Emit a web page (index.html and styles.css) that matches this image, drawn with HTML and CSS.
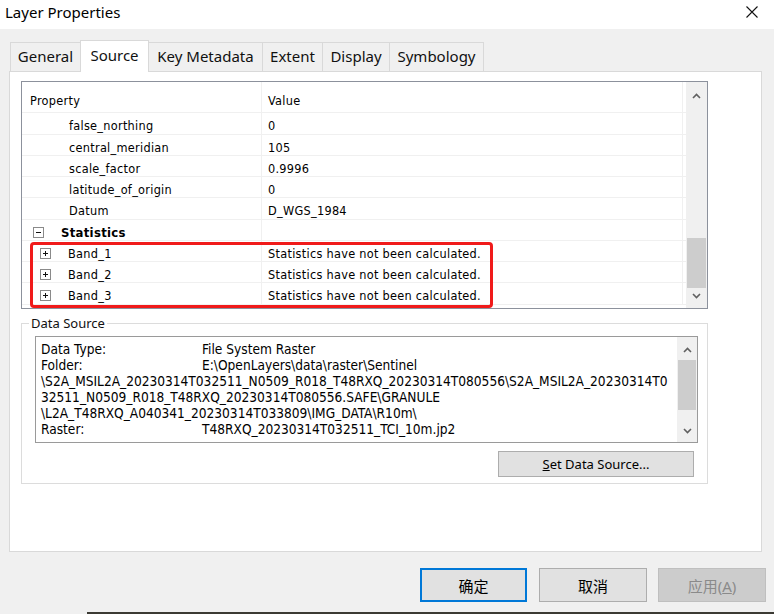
FILE: index.html
```html
<!DOCTYPE html>
<html lang="en">
<head>
    <meta charset="UTF-8">
    <title>Layer Properties</title>
    <link rel="stylesheet" href="styles.css">
</head>
<body>
    <div class="titlebar">
        <span class="title">Layer Properties</span>
        <svg class="close" width="12" height="12" viewBox="0 0 12 12"><path d="M0.5 0.5 L11.5 11.5 M11.5 0.5 L0.5 11.5" stroke="#111" stroke-width="1.1" fill="none"/></svg>
    </div>

    <div class="tabs">
        <div class="tab t-general">General</div>
        <div class="tab t-source active">Source</div>
        <div class="tab t-key">Key Metadata</div>
        <div class="tab t-extent">Extent</div>
        <div class="tab t-display">Display</div>
        <div class="tab t-symbology">Symbology</div>
    </div>

    <div class="panel">
        <div class="grid">
            <div class="grid-table">
                <div class="row head"><div class="c1">Property</div><div class="c2">Value</div></div>
                <div class="row"><div class="c1 child">false_northing</div><div class="c2">0</div></div>
                <div class="row"><div class="c1 child">central_meridian</div><div class="c2">105</div></div>
                <div class="row"><div class="c1 child">scale_factor</div><div class="c2">0.9996</div></div>
                <div class="row"><div class="c1 child">latitude_of_origin</div><div class="c2">0</div></div>
                <div class="row"><div class="c1 child">Datum</div><div class="c2">D_WGS_1984</div></div>
                <div class="row">
                    <div class="c1 group-row">
                        <svg class="toggle" width="11" height="11" viewBox="0 0 11 11"><rect x="0.5" y="0.5" width="10" height="10" fill="#fff" stroke="#8a8a8a"/><path d="M3 5.5 H8" stroke="#111"/></svg><b>Statistics</b>
                    </div>
                    <div class="c2"></div>
                </div>
                <div class="row">
                    <div class="c1 band">
                        <svg class="toggle" width="11" height="11" viewBox="0 0 11 11"><rect x="0.5" y="0.5" width="10" height="10" fill="#fff" stroke="#8a8a8a"/><path d="M3 5.5 H8 M5.5 3 V8" stroke="#111"/></svg>Band_1
                    </div>
                    <div class="c2">Statistics have not been calculated.</div>
                </div>
                <div class="row">
                    <div class="c1 band">
                        <svg class="toggle" width="11" height="11" viewBox="0 0 11 11"><rect x="0.5" y="0.5" width="10" height="10" fill="#fff" stroke="#8a8a8a"/><path d="M3 5.5 H8 M5.5 3 V8" stroke="#111"/></svg>Band_2
                    </div>
                    <div class="c2">Statistics have not been calculated.</div>
                </div>
                <div class="row">
                    <div class="c1 band">
                        <svg class="toggle" width="11" height="11" viewBox="0 0 11 11"><rect x="0.5" y="0.5" width="10" height="10" fill="#fff" stroke="#8a8a8a"/><path d="M3 5.5 H8 M5.5 3 V8" stroke="#111"/></svg>Band_3
                    </div>
                    <div class="c2">Statistics have not been calculated.</div>
                </div>
            </div>
            <div class="vscroll grid-scroll">
                <svg class="arrow" width="9" height="6" viewBox="0 0 9 6"><path d="M1 5 L4.5 1.5 L8 5" stroke="#606060" stroke-width="1.6" fill="none"/></svg>
                <div class="track"><div class="thumb"></div></div>
                <svg class="arrow" width="9" height="6" viewBox="0 0 9 6"><path d="M1 1 L4.5 4.5 L8 1" stroke="#606060" stroke-width="1.6" fill="none"/></svg>
            </div>
            <div class="highlight"></div>
        </div>

        <fieldset class="source-group">
            <legend>Data Source</legend>
            <div class="textbox">
                <div class="source-text">
                    <div class="line"><span class="label">Data Type:</span>File System Raster</div>
                    <div class="line"><span class="label">Folder:</span>E:\OpenLayers\data\raster\Sentinel</div>
                    <div class="line">\S2A_MSIL2A_20230314T032511_N0509_R018_T48RXQ_20230314T080556\S2A_MSIL2A_20230314T0</div>
                    <div class="line">32511_N0509_R018_T48RXQ_20230314T080556.SAFE\GRANULE</div>
                    <div class="line">\L2A_T48RXQ_A040341_20230314T033809\IMG_DATA\R10m\</div>
                    <div class="line"><span class="label">Raster:</span>T48RXQ_20230314T032511_TCI_10m.jp2</div>
                </div>
                <div class="vscroll text-scroll">
                    <svg class="arrow" width="9" height="6" viewBox="0 0 9 6"><path d="M1 5 L4.5 1.5 L8 5" stroke="#606060" stroke-width="1.6" fill="none"/></svg>
                    <div class="track"><div class="thumb"></div></div>
                    <svg class="arrow" width="9" height="6" viewBox="0 0 9 6"><path d="M1 1 L4.5 4.5 L8 1" stroke="#606060" stroke-width="1.6" fill="none"/></svg>
                </div>
            </div>
            <div class="source-actions">
                <button class="btn set-source"><u>S</u>et Data Source...</button>
            </div>
        </fieldset>
    </div>

    <div class="actions">
        <button class="btn dlg default">确定</button>
        <button class="btn dlg">取消</button>
        <button class="btn dlg disabled">应用(<u>A</u>)</button>
    </div>
    <div class="desktop"></div>
</body>
</html>
```

FILE: styles.css
```css
body {
    margin: 0;
    width: 774px;
    height: 614px;
    overflow: hidden;
    background: #f0f0f0;
    font-family: 'Noto Sans', 'Noto Sans CJK SC', sans-serif;
    color: #000;
}
.titlebar {
    height: 29px;
    background: #fff;
    display: flex;
    align-items: flex-start;
    justify-content: space-between;
}
.title {
    font-size: 15px;
    line-height: 24px;
    padding-left: 5px;
}
.close {
    margin: 6px 16px 0 0;
}

/* tabs */
.tabs {
    display: flex;
    align-items: flex-end;
    padding-left: 10px;
    height: 42px;
}
.tab {
    height: 30px;
    margin-bottom: -1px;
    margin-right: -1px;
    box-sizing: border-box;
    border: 1px solid #d9d9d9;
    background: #f0f0f0;
    font-size: 15px;
    line-height: 27px;
    text-align: center;
    color: #111;
}
.tab.active {
    height: 32px;
    background: #fff;
    border-bottom: none;
    position: relative;
    z-index: 1;
    line-height: 28px;
}
.t-general { width: 71px; }
.t-source { width: 69px; }
.t-key { width: 115px; }
.t-extent { width: 61px; }
.t-display { width: 68px; }
.t-symbology { width: 95px; }

.panel {
    margin-left: 9px;
    width: 753px;
    height: 481px;
    box-sizing: border-box;
    border: 1px solid #d9d9d9;
    background: #fff;
    padding: 9px 0 0 11px;
}

/* property grid */
.grid {
    position: relative;
    width: 687px;
    height: 228px;
    box-sizing: border-box;
    border: 1px solid #8c919c;
    display: flex;
    font-family: 'DejaVu Sans Condensed', 'Liberation Sans', sans-serif;
    font-size: 12.6px;
    letter-spacing: 0.28px;
}
.grid-table {
    width: 664px;
}
.row {
    display: flex;
    height: 21.25px;
    box-sizing: border-box;
    border-bottom: 1px solid #f0f0f0;
    line-height: 26px;
}
.row.head {
    height: 31.3px;
    line-height: 37px;
}
.c1 {
    width: 240px;
    box-sizing: border-box;
    border-right: 1px solid #f0f0f0;
    padding-left: 8px;
    white-space: nowrap;
}
.c2 {
    width: 421px;
    box-sizing: border-box;
    border-right: 1px solid #f0f0f0;
    padding-left: 6px;
    white-space: nowrap;
}
.toggle {
    vertical-align: -1px;
}
.c1.child {
    padding-left: 47px;
}
.c1.group-row {
    padding-left: 11px;
}
.c1.group-row b {
    margin-left: 17px;
    font-size: 13px;
}
.c1.band {
    padding-left: 18px;
}
.band .toggle {
    margin-right: 17px;
}
.highlight {
    position: absolute;
    left: 8px;
    top: 160px;
    width: 463px;
    height: 66px;
    box-sizing: border-box;
    border: 3px solid #f01a1a;
    border-radius: 4px;
}

/* scrollbars */
.vscroll {
    background: #f0f0f0;
    display: flex;
    flex-direction: column;
    align-items: center;
}
.grid-scroll {
    width: 21px;
}
.vscroll .arrow {
    flex: none;
}
.grid-scroll .arrow:first-child {
    margin-top: 11px;
}
.grid-scroll .track {
    flex: 1;
    width: 100%;
    position: relative;
}
.grid-scroll .thumb {
    position: absolute;
    left: 1px;
    right: 1px;
    top: 139px;
    height: 50px;
    background: #cdcdcd;
}
.grid-scroll .arrow:last-child {
    margin-bottom: 9px;
}

/* data source */
.source-group {
    margin: 6px 0 0 0;
    width: 687px;
    box-sizing: border-box;
    border: 1px solid #dcdcdc;
    padding: 0 0 6px 0;
}
.source-group legend {
    margin-left: 7px;
    padding: 0 2px;
    font-size: 13px;
    line-height: 16px;
    color: #111;
}
.textbox {
    margin: 5px 9px 0 13px;
    height: 107px;
    box-sizing: border-box;
    border: 1px solid #9a9a9a;
    display: flex;
}
.source-text {
    flex: 1;
    padding: 4px 0 0 5px;
    font-family: 'DejaVu Sans Condensed', 'Liberation Sans', sans-serif;
    font-size: 13.6px;
    line-height: 16px;
    white-space: nowrap;
    overflow: hidden;
}
.label {
    display: inline-block;
    width: 161px;
}
.text-scroll {
    width: 20px;
}
.text-scroll .arrow:first-child {
    margin-top: 10px;
}
.text-scroll .track {
    flex: 1;
    width: 100%;
    position: relative;
}
.text-scroll .thumb {
    position: absolute;
    left: 1px;
    right: 1px;
    top: 7px;
    height: 50px;
    background: #cdcdcd;
}
.text-scroll .arrow:last-child {
    margin-bottom: 8px;
}
.source-actions {
    display: flex;
    justify-content: flex-end;
    padding: 8px 13px 0 0;
}

/* buttons */
.btn {
    font-family: 'Noto Sans', 'Noto Sans CJK SC', sans-serif;
    background: #e1e1e1;
    border: 1px solid #adadad;
    color: #000;
    padding: 0;
    margin: 0;
}
.set-source {
    width: 196px;
    height: 26px;
    font-size: 13px;
}
.actions {
    display: flex;
    justify-content: flex-end;
    gap: 12px;
    padding: 16px 8px 0 0;
    height: 34px;
}
.dlg {
    width: 108px;
    height: 34px;
    font-size: 15px;
}
.dlg.default {
    width: 107px;
    border: 2px solid #0078d7;
}
.dlg.disabled {
    margin-left: -1px;
    background: #cccccc;
    border-color: #bfbfbf;
    color: #8a8a8a;
}
.desktop {
    margin: 10px 0 0 87px;
    height: 2px;
    background: #3b3a33;
}
```
